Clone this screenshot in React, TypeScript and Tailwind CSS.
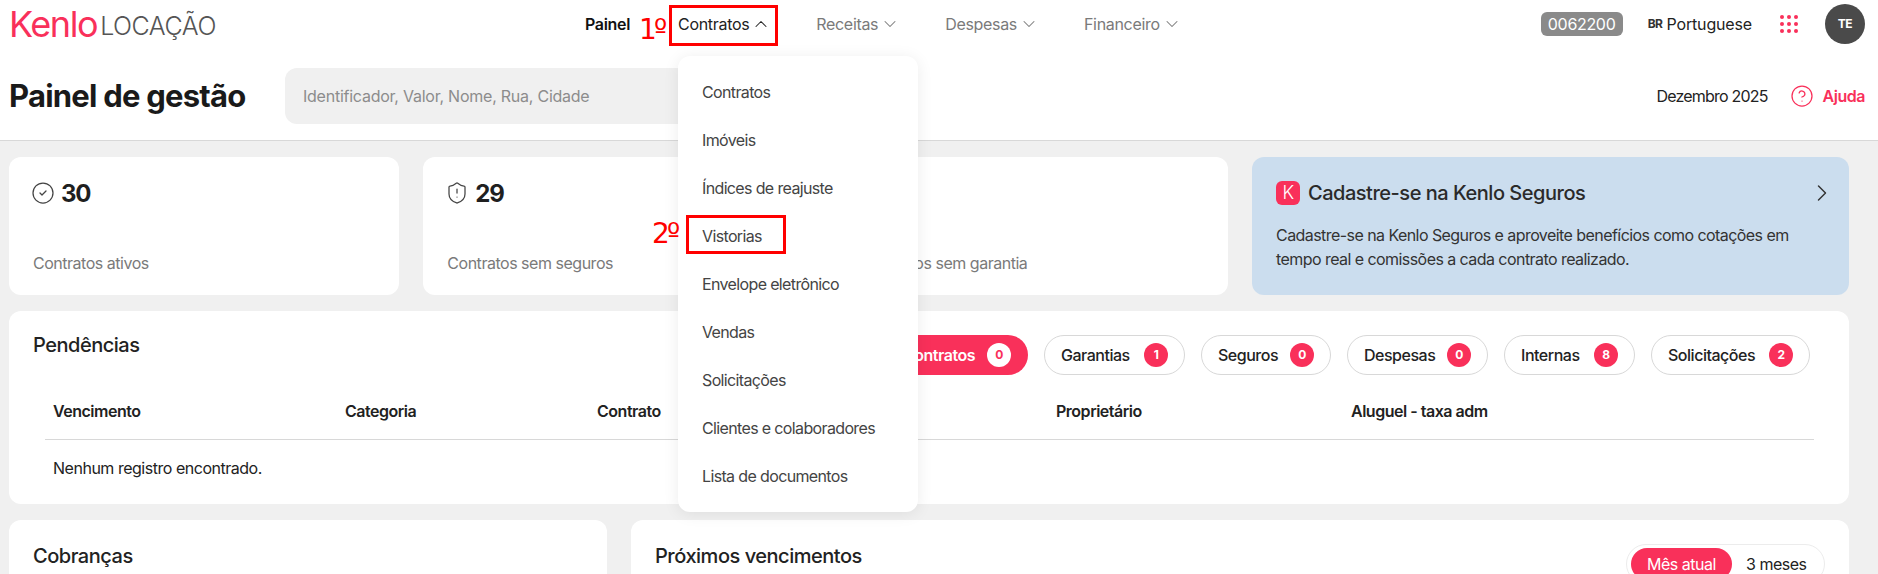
import { ChevronDown, ChevronUp, ChevronRight, ShieldAlert, CircleHelp, CircleCheck, ShieldCheck } from 'lucide-react'

const navItems = ['Receitas', 'Despesas', 'Financeiro']

const menuItems = [
  'Contratos',
  'Imóveis',
  'Índices de reajuste',
  'Vistorias',
  'Envelope eletrônico',
  'Vendas',
  'Solicitações',
  'Clientes e colaboradores',
  'Lista de documentos',
]

const tabs = [
  { name: 'Garantias', count: 1, width: 'w-[141px]' },
  { name: 'Seguros', count: 0, width: 'w-[130px]' },
  { name: 'Despesas', count: 0, width: 'w-[141px]' },
  { name: 'Internas', count: 8, width: 'w-[131px]' },
  { name: 'Solicitações', count: 2, width: 'w-[159px]' },
]

function StatCard({ icon, value, label }: { icon: React.ReactNode; value: string; label: string }) {
  return (
    <div className="flex h-[138px] flex-1 flex-col rounded-xl bg-white px-6 pt-6">
      <div className="flex h-6 items-center gap-1.5">
        {icon}
        <span className="pt-0.5 text-2xl font-bold tracking-[-0.05em] text-[#1f1f1f]">{value}</span>
      </div>
      <span className="mt-[46px] text-base tracking-[-0.03em] text-[#7a7a7a]">{label}</span>
    </div>
  )
}

export default function App() {
  return (
    <div className="relative h-[574px] w-[1878px] overflow-hidden bg-[#f0f0f0] font-['Inter',sans-serif] text-base tracking-[-0.03em] text-[#222]">
      <header className="flex h-12 items-center bg-white pl-[9px] pr-[13px]">
        <div className="flex w-[576px] items-end gap-[3px]">
          <span className="text-[36px] leading-[38px] tracking-[-0.04em] text-[#f9305a]">Kenlo</span>
          <span className="text-[25px] font-light leading-[34px] text-[#555]">LOCAÇÃO</span>
        </div>
        <nav className="flex items-center gap-[45px] tracking-[-0.02em]">
          <span className="mr-[3px] font-semibold text-[#111]">Painel</span>
          <span className="flex items-center gap-0.5 text-[#222]">
            Contratos
            <ChevronUp className="h-5 w-5" strokeWidth={1.25} />
          </span>
          {navItems.map((item) => (
            <span key={item} className="flex items-center gap-0.5 text-[#7a7a7a]">
              {item}
              <ChevronDown className="h-5 w-5" strokeWidth={1.25} />
            </span>
          ))}
        </nav>
        <div className="ml-auto flex items-center">
          <span className="flex h-6 w-[82px] items-center justify-center rounded-md bg-[#8a8a8a] tracking-[-0.02em] text-white">0062200</span>
          <span className="ml-[25px] text-xs font-bold text-[#333]">BR</span>
          <span className="ml-1 tracking-[-0.01em] text-[#222]">Portuguese</span>
          <div className="ml-7 grid grid-cols-3 gap-[3px]">
            {Array.from({ length: 9 }).map((_, i) => (
              <span key={i} className="h-1 w-1 rounded-full bg-[#f9305a]" />
            ))}
          </div>
          <div className="ml-[27px] flex h-10 w-10 items-center justify-center rounded-full bg-[#4a4a4a] text-xs font-bold text-white">TE</div>
        </div>
      </header>

      <div className="flex h-[93px] items-center border-b border-[#d8d8d8] bg-white pl-[9px] pr-[13px] pt-1">
        <h1 className="w-[276px] text-[31px] font-bold tracking-[-0.025em] text-[#1a1a1a]">Painel de gestão</h1>
        <div className="flex h-14 w-[560px] items-center rounded-xl bg-[#f0f0f0] px-[18px] tracking-[-0.015em] text-[#8c8c8c]">
          Identificador, Valor, Nome, Rua, Cidade
        </div>
        <span className="ml-auto tracking-[-0.05em] text-[#222]">Dezembro 2025</span>
        <CircleHelp className="ml-[22px] h-6 w-6 text-[#f9305a]" strokeWidth={1.25} />
        <span className="ml-[9px] font-semibold text-[#f9305a]">Ajuda</span>
      </div>

      <main className="flex flex-col gap-4 pl-[9px] pr-[29px] pt-4">
        <div className="flex gap-6">
          <div className="flex flex-1 gap-6">
            <StatCard icon={<CircleCheck className="-ml-0.5 h-6 w-6 text-[#444]" strokeWidth={1.25} />} value="30" label="Contratos ativos" />
            <StatCard icon={<ShieldAlert className="-ml-0.5 h-6 w-6 text-[#444]" strokeWidth={1.25} />} value="29" label="Contratos sem seguros" />
            <StatCard icon={<ShieldCheck className="-ml-0.5 h-6 w-6 text-[#444]" strokeWidth={1.25} />} value="12" label="Contratos sem garantia" />
          </div>
          <div className="h-[138px] w-[597px] rounded-xl bg-[#cbddee] px-6 pt-6">
            <div className="flex h-6 items-center">
              <span className="flex h-6 w-6 items-center justify-center rounded-md bg-[#f9305a] text-lg font-light text-white">K</span>
              <span className="ml-2 text-xl font-medium text-[#2a2a2a]">Cadastre-se na Kenlo Seguros</span>
              <ChevronRight className="ml-auto -mr-[11px] h-7 w-7 shrink-0 text-[#333]" strokeWidth={1.25} />
            </div>
            <p className="mt-[18px] leading-6 tracking-[-0.035em] text-[#333]">
              Cadastre-se na Kenlo Seguros e aproveite benefícios como cotações em
              <br />
              tempo real e comissões a cada contrato realizado.
            </p>
          </div>
        </div>

        <section className="h-[193px] rounded-xl bg-white">
          <div className="flex pl-6 pr-[39px] pt-6">
            <h2 className="-mt-1 text-xl font-medium text-[#222]">Pendências</h2>
            <div className="ml-auto flex gap-4">
              <div className="flex h-10 items-center gap-3 rounded-full bg-[#f9305a] pl-4 pr-[17px] font-semibold text-white">
                Contratos
                <span className="flex h-6 w-6 items-center justify-center rounded-full bg-white text-xs font-bold text-[#f9305a]">0</span>
              </div>
              {tabs.map((tab) => (
                <div key={tab.name} className={`flex h-10 items-center justify-between rounded-full border border-[#d8d8d8] px-4 font-medium text-[#222] ${tab.width}`}>
                  {tab.name}
                  <span className="flex h-6 w-6 items-center justify-center rounded-full bg-[#f9305a] text-xs font-bold text-white">{tab.count}</span>
                </div>
              ))}
            </div>
          </div>
          <div className="mx-9 mt-[13px] w-[1769px]">
            <div className="grid h-[52px] grid-cols-[292px_252px_459px_295px_1fr] items-center border-b border-[#d8d8d8] pb-1.5 pl-2 font-semibold text-[#222]">
              <span>Vencimento</span>
              <span>Categoria</span>
              <span>Contrato</span>
              <span>Proprietário</span>
              <span>Aluguel - taxa adm</span>
            </div>
            <div className="pl-2 pt-4 text-[#222]">Nenhum registro encontrado.</div>
          </div>
        </section>

        <div className="flex gap-6">
          <section className="h-[200px] w-[598px] rounded-xl bg-white px-6 pt-[22px]">
            <h2 className="text-xl font-medium text-[#222]">Cobranças</h2>
          </section>
          <section className="h-[200px] flex-1 rounded-xl bg-white pl-6 pr-6">
            <div className="flex">
              <h2 className="pt-[22px] text-xl font-medium text-[#222]">Próximos vencimentos</h2>
              <div className="ml-auto mt-6 flex h-10 w-[199px] items-center rounded-full border border-[#ececec] p-1">
                <span className="flex h-8 w-[101px] items-center justify-center rounded-full bg-[#f9305a] text-white">Mês atual</span>
                <span className="pl-[14px] text-[#222]">3 meses</span>
              </div>
            </div>
          </section>
        </div>
      </main>

      {/* dropdown de Contratos */}
      <div className="absolute left-[678px] top-14 w-60 rounded-xl bg-white py-3 shadow-[0_2px_16px_rgba(0,0,0,0.08)]">
        {menuItems.map((item) => (
          <div key={item} className="flex h-12 items-center px-6 tracking-[-0.04em] text-[#444]">
            {item}
          </div>
        ))}
      </div>

      {/* marcacoes em vermelho */}
      <div className="absolute left-[669px] top-[5px] h-[41px] w-[109px] border-[3px] border-[#ff0000]" />
      <span className="absolute left-[639px] top-[12px] font-['DejaVu_Sans',sans-serif] text-[28px] leading-9 tracking-[-0.1em] text-[#ff0000]">1º</span>
      <div className="absolute left-[686px] top-[215px] h-[39px] w-[100px] border-[3px] border-[#ff0000]" />
      <span className="absolute left-[652px] top-[216px] font-['DejaVu_Sans',sans-serif] text-[28px] leading-9 tracking-[-0.1em] text-[#ff0000]">2º</span>
    </div>
  )
}
